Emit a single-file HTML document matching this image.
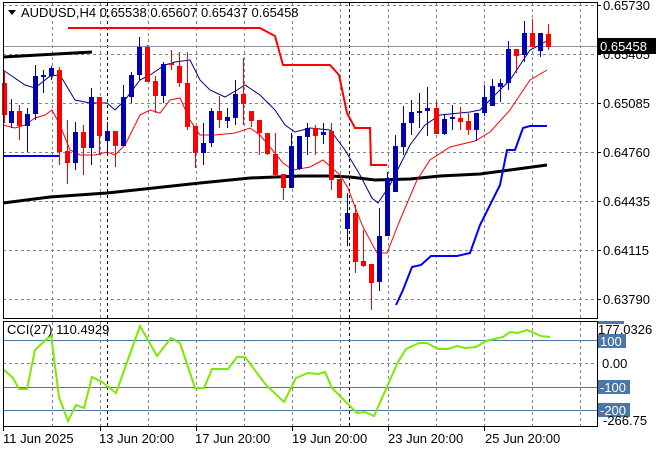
<!DOCTYPE html>
<html><head><meta charset="utf-8"><style>
html,body{margin:0;padding:0;background:#fff;width:660px;height:450px;overflow:hidden}
svg{display:block}
text{font-family:"Liberation Sans",sans-serif;font-size:12px;fill:#000}
</style></head><body>
<svg width="660" height="450" viewBox="0 0 660 450" xmlns="http://www.w3.org/2000/svg">
<g stroke="#7a8594" stroke-width="1" stroke-dasharray="3,3" fill="none">
<path d="M3 5.5H597M3 54.5H597M3 103.5H597M3 152.5H597M3 201.5H597M3 250.5H597M3 299.5H597"/>
<path d="M52.5 3V318M100.5 3V318M148.5 3V318M196.5 3V318M244.5 3V318M292.5 3V318M340.5 3V318M388.5 3V318M436.5 3V318M484.5 3V318M532.5 3V318M580.5 3V318"/>
<path d="M52.5 322V426M100.5 322V426M148.5 322V426M196.5 322V426M244.5 322V426M292.5 322V426M340.5 322V426M388.5 322V426M436.5 322V426M484.5 322V426M532.5 322V426M580.5 322V426"/>
<path d="M3 363.5H597"/>
</g>
<g stroke="#000" stroke-dasharray="3,3"><path d="M107.5 3V426M349.5 3V426"/></g>
<path d="M3 46.5H597" stroke="#8a96a4"/>
<g stroke="#4a76a8"><path d="M3 340.5H597M3 387.5H597M3 410.5H597"/></g>
<polyline fill="none" stroke="#000" stroke-width="3" points="3,57 92,52"/>
<polyline fill="none" stroke="#000" stroke-width="3" points="3,203 50,197 107,193 200,183 250,178 300,176 330,176 350,177 375,180 410,179 440,176 480,174 510,170 547,165"/>
<polyline fill="none" stroke="#f00" stroke-width="2" points="68,28 260,28 275,36 283,65 330,65 339,75 347,113 355,128 370,128 371,165 387,165"/>
<polyline fill="none" stroke="#00f" stroke-width="2" points="3,156 59,156"/>
<polyline fill="none" stroke="#00f" stroke-width="2" points="396,305 403,290 412,267 421,265 431,256 457,256 470,253 480,225 500,185 507,150 515,150 523,128 530,126 547,126"/>
<polyline fill="none" stroke="#000080" stroke-width="1" points="3,70 25,85 35,88 50,76 60,75 75,100 90,103 107,103 115,110 125,100 140,80 150,75 165,65 175,62 190,60 200,80 210,90 225,97 237,90 245,85 260,95 275,110 285,125 295,132 310,128 330,130 345,150 360,175 372,198 378,203 390,185 400,165 410,145 425,125 440,115 460,113 470,112 480,110 495,95 510,80 520,65 530,50 540,45 548,40"/>
<polyline fill="none" stroke="#f00" stroke-width="1" points="3,125 15,128 25,125 35,118 45,115 52,110 60,125 70,150 80,155 95,155 107,152 115,155 125,145 140,115 150,110 160,113 170,100 180,98 190,120 200,135 215,135 235,133 250,128 260,135 283,163 293,170 310,167 323,160 340,175 348,188 355,207 363,227 377,253 387,253 400,220 417,180 430,160 450,147 475,141 490,132 510,110 530,80 547,70"/>
<path fill="none" stroke="#0000b4" stroke-width="1" d="M11.5 99V128M27.5 108V152M35.5 65V120M43.5 70V93M51.5 66V80M75.5 122V170M91.5 88V165M107.5 122V153M123.5 85V146M131.5 72V103M139.5 37V80M163.5 62V103M203.5 123V165M211.5 108V147M227.5 108V128M235.5 80V125M291.5 133V188M299.5 136V170M307.5 123V155M323.5 123V144M347.5 193V246M379.5 208V291M387.5 172V236M395.5 135V192M403.5 106V155M411.5 100V135M419.5 93V128M427.5 87V136M444.5 115V135M452.5 105V130M476.5 113V141M484.5 85V116M492.5 79V106M500.5 79V102M508.5 41V90M524.5 21V62M540.5 33V57"/>
<path fill="none" stroke="#0000b4" stroke-width="5" d="M11.5 111V123M27.5 114V126M35.5 76V114M43.5 75V77M51.5 68V76M75.5 132V163M91.5 97V148M107.5 131V141M123.5 97V146M131.5 75V97M139.5 47V75M163.5 64V96M203.5 143V153M211.5 111V143M227.5 117V121M235.5 94V118M291.5 146V188M299.5 136V169M307.5 128V137M323.5 132V135M347.5 213V229M379.5 236V282M387.5 178V236M395.5 146V192M403.5 123V147M411.5 112V123M419.5 111V113M427.5 108V111M444.5 119V134M452.5 117V119M476.5 113V130M484.5 97V113M492.5 86V106M500.5 83V87M508.5 49V83M524.5 33V55M540.5 33V51"/>
<path fill="none" stroke="#f00" stroke-width="1" d="M4.5 72V123M19.5 105V140M59.5 67V165M67.5 120V184M83.5 125V175M99.5 97V155M115.5 131V167M147.5 45V82M155.5 76V113M171.5 50V70M179.5 52V87M187.5 52V130M195.5 126V168M219.5 96V128M243.5 58V125M251.5 111V127M259.5 120V155M267.5 133V155M275.5 133V177M283.5 174V200M315.5 125V155M331.5 123V190M339.5 179V198M355.5 205V273M363.5 230V267M371.5 264V310M436.5 101V134M460.5 107V130M468.5 113V135M516.5 49V73M532.5 19V47M548.5 24V50"/>
<path fill="none" stroke="#f00" stroke-width="5" d="M4.5 83V115M19.5 111V126M59.5 70V152M67.5 151V163M83.5 132V148M99.5 97V136M115.5 131V146M147.5 47V82M155.5 81V96M171.5 63V65M179.5 66V83M187.5 83V127M195.5 126V153M219.5 111V120M243.5 94V104M251.5 111V121M259.5 120V133M267.5 133V154M275.5 154V175M283.5 174V188M315.5 128V136M331.5 131V180M339.5 179V198M355.5 213V262M363.5 261V266M371.5 264V283M436.5 108V134M460.5 118V122M468.5 121V130M516.5 49V56M532.5 33V47M548.5 34V47"/>
<polyline fill="none" stroke="#7fe800" stroke-width="2" points="3,369 13,378 19,389 27,389 35,350 51,335 59,397 68,421 76,405 84,408 92,377 102,382 116,393 140,326 157,356 171,338 180,343 195,388 204,388 212,369 228,369 237,357 245,357 266,385 284,402 296,378 308,373 318,374 325,372 332,388 357,413 365,412 374,416 398,362 406,349 419,343 427,343 438,349 448,349 457,346 465,348 476,347 486,341 503,337 510,332 518,333 527,330 541,336 550,337"/>
<g fill="none" stroke="#000" stroke-width="1">
<rect x="3.5" y="2.5" width="594" height="316"/>
<rect x="3.5" y="321.5" width="594" height="105"/>
</g>
<g stroke="#000"><path d="M597 5.5H601M597 54.5H601M597 103.5H601M597 152.5H601M597 201.5H601M597 250.5H601M597 299.5H601"/>
<path d="M3.5 427V431M100.5 427V431M196.5 427V431M292.5 427V431M388.5 427V431M484.5 427V431"/></g>
<path d="M8 10h8l-4 5z" fill="#000"/>
<text x="21" y="17" style="font-size:13px">AUDUSD,H4  0.65538 0.65607 0.65437 0.65458</text>
<text x="603" y="10" style="font-size:13px">0.65730</text>
<text x="603" y="59" style="font-size:13px">0.65405</text>
<text x="603" y="108" style="font-size:13px">0.65085</text>
<text x="603" y="157" style="font-size:13px">0.64760</text>
<text x="603" y="206" style="font-size:13px">0.64435</text>
<text x="603" y="255" style="font-size:13px">0.64115</text>
<text x="603" y="304" style="font-size:13px">0.63790</text>
<rect x="598" y="38" width="58" height="16" fill="#000"/>
<text x="600" y="51" style="fill:#fff;font-size:13px">0.65458</text>
<text x="7" y="334" style="font-size:13px">CCI(27) 110.4929</text>
<rect x="598" y="321" width="26" height="3" fill="#4a76a8"/>
<text x="598" y="334" style="font-size:13px">177.0326</text>
<rect x="598" y="334" width="28" height="14" fill="#4a76a8"/>
<text x="600" y="346" style="fill:#fff;font-size:13px">100</text>
<text x="602" y="368" style="font-size:13px">0.00</text>
<rect x="598" y="380" width="32" height="14" fill="#4a76a8"/>
<text x="600" y="392" style="fill:#fff;font-size:13px">-100</text>
<rect x="598" y="403" width="32" height="14" fill="#4a76a8"/>
<text x="600" y="415" style="fill:#fff;font-size:13px">-200</text>
<text x="603" y="425" style="font-size:13px">-266.75</text>
<text x="3" y="443" style="font-size:13px">11 Jun 2025</text>
<text x="99" y="443" style="font-size:13px">13 Jun 20:00</text>
<text x="195" y="443" style="font-size:13px">17 Jun 20:00</text>
<text x="292" y="443" style="font-size:13px">19 Jun 20:00</text>
<text x="388" y="443" style="font-size:13px">23 Jun 20:00</text>
<text x="485" y="443" style="font-size:13px">25 Jun 20:00</text>
</svg>
</body></html>
